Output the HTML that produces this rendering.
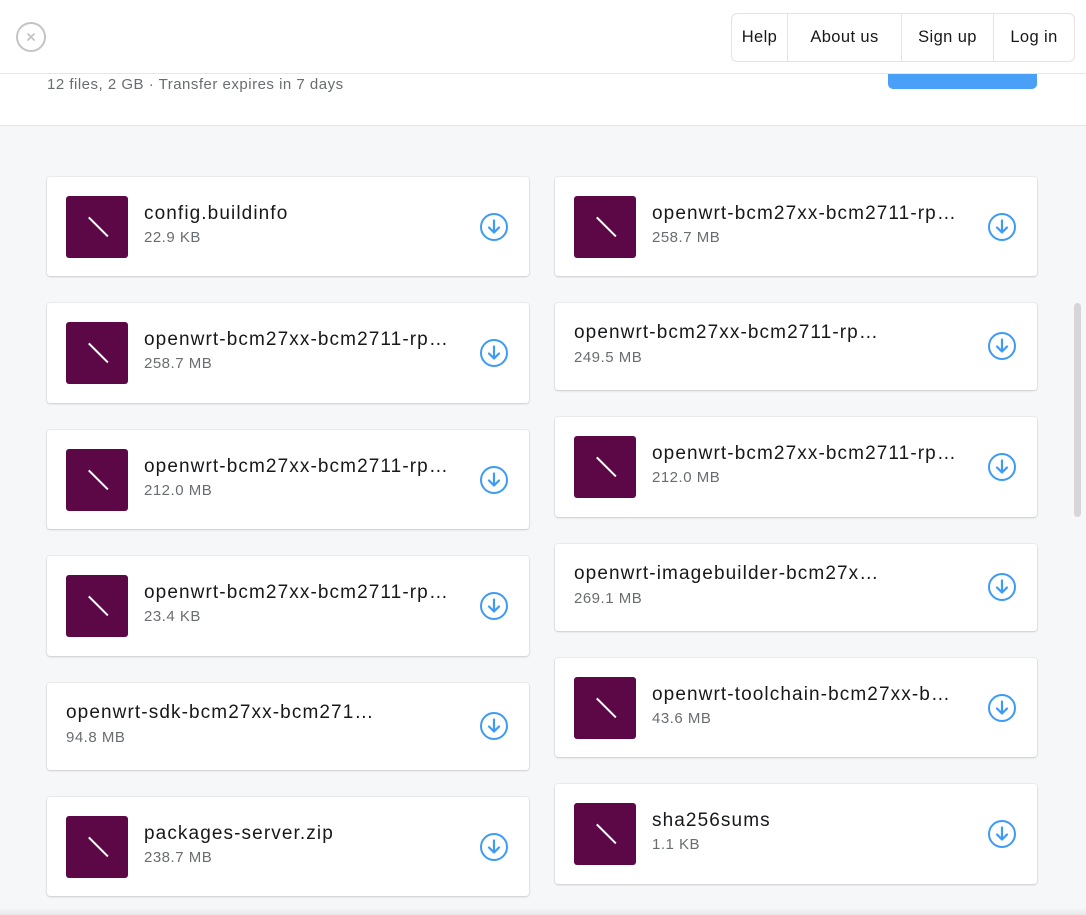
<!DOCTYPE html>
<html><head><meta charset="utf-8"><style>
*{box-sizing:border-box;margin:0;padding:0}
body{width:1086px;height:915px;overflow:hidden;background:#f6f7f9;font-family:"Liberation Sans",sans-serif;position:relative}
.hdr{position:absolute;left:0;top:0;width:1086px;height:126px;background:#fff;border-bottom:1px solid #e4e6ea}
.hl{position:absolute;left:0;top:73px;width:1086px;height:1px;background:#e4e6ea}
.close{position:absolute;left:16px;top:22px;width:30px;height:30px;border:2px solid #c4c4c4;border-radius:50%}
.nav{position:absolute;left:731px;top:13px;width:344px;height:49px;border:1px solid #e2e3e6;border-radius:6px;display:flex;background:#fff}
.nav div{height:100%;display:flex;align-items:center;justify-content:center;font-size:16.5px;letter-spacing:.4px;color:#17181a;border-right:1px solid #e2e3e6}
.nav div:last-child{border-right:none}
.meta{position:absolute;left:47px;top:76px;font-size:15px;letter-spacing:.5px;color:#6a6d70}
.blue{position:absolute;left:888px;top:74px;width:149px;height:15px;background:#4aa0f7;border-radius:0 0 5px 5px}
.card{position:absolute;background:#fff;border-radius:3px;box-shadow:0 1px 2px rgba(0,0,0,.14),0 0 0 1px rgba(0,0,0,.04);width:482px}
.th{position:absolute;left:19px;top:19px;width:62px;height:62px;background:#5c0746;border-radius:3px}
.th:after{content:"";position:absolute;left:19px;top:30px;width:27px;height:1.5px;background:#fff;transform:rotate(45deg)}
.t{position:absolute;font-size:19px;letter-spacing:1.1px;color:#17181a;white-space:nowrap;line-height:22px}
.s{position:absolute;font-size:15px;letter-spacing:.5px;color:#6a6d70;line-height:18px}
.dl{position:absolute;left:432px;width:30px;height:30px}
.sb{position:absolute;left:1074px;top:303px;width:7px;height:214px;background:#d6d6d6;border-radius:4px}
.bot{position:absolute;left:0;top:908px;width:1086px;height:7px;background:linear-gradient(#f6f7f9,#e6e7e9)}
</style></head><body>
<div class="hdr"></div>
<div class="hl"></div>
<div class="close"><svg width="26" height="26" viewBox="0 0 26 26" style="position:absolute;left:0;top:0"><path d="M10 10l6 6M16 10l-6 6" stroke="#c4c4c4" stroke-width="1.8" stroke-linecap="round"/></svg></div>
<div class="nav"><div style="width:56px">Help</div><div style="width:114px">About us</div><div style="width:92px">Sign up</div><div style="flex:1">Log in</div></div>
<div class="meta">12 files, 2 GB · Transfer expires in 7 days</div>
<div class="blue"></div>

<!-- left column -->
<div class="card" style="left:47px;top:177px;height:99px"><div class="th"></div><div class="t" style="left:97px;top:26px">config.buildinfo</div><div class="s" style="left:97px;top:52px">22.9 KB</div><svg class="dl" style="top:35px" viewBox="0 0 30 30"><circle cx="15" cy="15" r="13" fill="none" stroke="#3d9bf5" stroke-width="2"/><path d="M15 8.5v12M10 15.5l5 5 5-5" fill="none" stroke="#3d9bf5" stroke-width="2.2" stroke-linecap="round" stroke-linejoin="round"/></svg></div>
<div class="card" style="left:47px;top:303px;height:100px"><div class="th"></div><div class="t" style="left:97px;top:26px">openwrt-bcm27xx-bcm2711-rp…</div><div class="s" style="left:97px;top:52px">258.7 MB</div><svg class="dl" style="top:35px" viewBox="0 0 30 30"><circle cx="15" cy="15" r="13" fill="none" stroke="#3d9bf5" stroke-width="2"/><path d="M15 8.5v12M10 15.5l5 5 5-5" fill="none" stroke="#3d9bf5" stroke-width="2.2" stroke-linecap="round" stroke-linejoin="round"/></svg></div>
<div class="card" style="left:47px;top:430px;height:99px"><div class="th"></div><div class="t" style="left:97px;top:26px">openwrt-bcm27xx-bcm2711-rp…</div><div class="s" style="left:97px;top:52px">212.0 MB</div><svg class="dl" style="top:35px" viewBox="0 0 30 30"><circle cx="15" cy="15" r="13" fill="none" stroke="#3d9bf5" stroke-width="2"/><path d="M15 8.5v12M10 15.5l5 5 5-5" fill="none" stroke="#3d9bf5" stroke-width="2.2" stroke-linecap="round" stroke-linejoin="round"/></svg></div>
<div class="card" style="left:47px;top:556px;height:100px"><div class="th"></div><div class="t" style="left:97px;top:26px">openwrt-bcm27xx-bcm2711-rp…</div><div class="s" style="left:97px;top:52px">23.4 KB</div><svg class="dl" style="top:35px" viewBox="0 0 30 30"><circle cx="15" cy="15" r="13" fill="none" stroke="#3d9bf5" stroke-width="2"/><path d="M15 8.5v12M10 15.5l5 5 5-5" fill="none" stroke="#3d9bf5" stroke-width="2.2" stroke-linecap="round" stroke-linejoin="round"/></svg></div>
<div class="card" style="left:47px;top:683px;height:87px"><div class="t" style="left:19px;top:19px">openwrt-sdk-bcm27xx-bcm271…</div><div class="s" style="left:19px;top:46px">94.8 MB</div><svg class="dl" style="top:28px" viewBox="0 0 30 30"><circle cx="15" cy="15" r="13" fill="none" stroke="#3d9bf5" stroke-width="2"/><path d="M15 8.5v12M10 15.5l5 5 5-5" fill="none" stroke="#3d9bf5" stroke-width="2.2" stroke-linecap="round" stroke-linejoin="round"/></svg></div>
<div class="card" style="left:47px;top:797px;height:99px"><div class="th"></div><div class="t" style="left:97px;top:26px">packages-server.zip</div><div class="s" style="left:97px;top:52px">238.7 MB</div><svg class="dl" style="top:35px" viewBox="0 0 30 30"><circle cx="15" cy="15" r="13" fill="none" stroke="#3d9bf5" stroke-width="2"/><path d="M15 8.5v12M10 15.5l5 5 5-5" fill="none" stroke="#3d9bf5" stroke-width="2.2" stroke-linecap="round" stroke-linejoin="round"/></svg></div>

<!-- right column -->
<div class="card" style="left:555px;top:177px;height:99px"><div class="th"></div><div class="t" style="left:97px;top:26px">openwrt-bcm27xx-bcm2711-rp…</div><div class="s" style="left:97px;top:52px">258.7 MB</div><svg class="dl" style="top:35px" viewBox="0 0 30 30"><circle cx="15" cy="15" r="13" fill="none" stroke="#3d9bf5" stroke-width="2"/><path d="M15 8.5v12M10 15.5l5 5 5-5" fill="none" stroke="#3d9bf5" stroke-width="2.2" stroke-linecap="round" stroke-linejoin="round"/></svg></div>
<div class="card" style="left:555px;top:303px;height:87px"><div class="t" style="left:19px;top:19px">openwrt-bcm27xx-bcm2711-rp…</div><div class="s" style="left:19px;top:46px">249.5 MB</div><svg class="dl" style="top:28px" viewBox="0 0 30 30"><circle cx="15" cy="15" r="13" fill="none" stroke="#3d9bf5" stroke-width="2"/><path d="M15 8.5v12M10 15.5l5 5 5-5" fill="none" stroke="#3d9bf5" stroke-width="2.2" stroke-linecap="round" stroke-linejoin="round"/></svg></div>
<div class="card" style="left:555px;top:417px;height:100px"><div class="th"></div><div class="t" style="left:97px;top:26px">openwrt-bcm27xx-bcm2711-rp…</div><div class="s" style="left:97px;top:52px">212.0 MB</div><svg class="dl" style="top:35px" viewBox="0 0 30 30"><circle cx="15" cy="15" r="13" fill="none" stroke="#3d9bf5" stroke-width="2"/><path d="M15 8.5v12M10 15.5l5 5 5-5" fill="none" stroke="#3d9bf5" stroke-width="2.2" stroke-linecap="round" stroke-linejoin="round"/></svg></div>
<div class="card" style="left:555px;top:544px;height:87px"><div class="t" style="left:19px;top:19px">openwrt-imagebuilder-bcm27x…</div><div class="s" style="left:19px;top:46px">269.1 MB</div><svg class="dl" style="top:28px" viewBox="0 0 30 30"><circle cx="15" cy="15" r="13" fill="none" stroke="#3d9bf5" stroke-width="2"/><path d="M15 8.5v12M10 15.5l5 5 5-5" fill="none" stroke="#3d9bf5" stroke-width="2.2" stroke-linecap="round" stroke-linejoin="round"/></svg></div>
<div class="card" style="left:555px;top:658px;height:99px"><div class="th"></div><div class="t" style="left:97px;top:26px">openwrt-toolchain-bcm27xx-b…</div><div class="s" style="left:97px;top:52px">43.6 MB</div><svg class="dl" style="top:35px" viewBox="0 0 30 30"><circle cx="15" cy="15" r="13" fill="none" stroke="#3d9bf5" stroke-width="2"/><path d="M15 8.5v12M10 15.5l5 5 5-5" fill="none" stroke="#3d9bf5" stroke-width="2.2" stroke-linecap="round" stroke-linejoin="round"/></svg></div>
<div class="card" style="left:555px;top:784px;height:100px"><div class="th"></div><div class="t" style="left:97px;top:26px">sha256sums</div><div class="s" style="left:97px;top:52px">1.1 KB</div><svg class="dl" style="top:35px" viewBox="0 0 30 30"><circle cx="15" cy="15" r="13" fill="none" stroke="#3d9bf5" stroke-width="2"/><path d="M15 8.5v12M10 15.5l5 5 5-5" fill="none" stroke="#3d9bf5" stroke-width="2.2" stroke-linecap="round" stroke-linejoin="round"/></svg></div>

<div class="sb"></div>
<div class="bot"></div>
</body></html>
